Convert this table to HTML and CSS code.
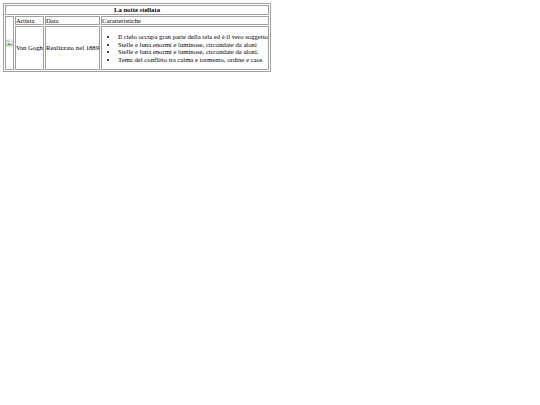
FILE: index.html
```html
<!DOCTYPE html>
<html lang="it">
<head>
<meta charset="utf-8">
<title>La notte stellata</title>
<link rel="stylesheet" href="styles.css">
</head>
<body>
<table class="painting">
  <tr>
    <th colspan="4">La notte stellata</th>
  </tr>
  <tr>
    <td rowspan="2" class="pic"><svg class="broken" viewBox="0 0 16 16" width="7" height="8"><path d="M1 1h10l4 4v10H1z" fill="#f4f4f4" stroke="#9a9a9a"/><path d="M2 13l4-5 3 3 2-2 3 4z" fill="#5a9a4a"/><circle cx="5" cy="5" r="1.5" fill="#5b8fd6"/></svg></td>
    <td>Artista</td>
    <td>Data</td>
    <td>Caratteristiche</td>
  </tr>
  <tr>
    <td>Van Gogh</td>
    <td>Realizzato nel 1889</td>
    <td>
      <ul class="features">
        <li>Il cielo occupa gran parte della tela ed è il vero soggetto</li>
        <li>Stelle e luna enormi e luminose, circondate da aloni</li>
        <li>Stelle e luna enormi e luminose, circondate da aloni.</li>
        <li>Tema del conflitto tra calma e tormento, ordine e caos</li>
      </ul>
    </td>
  </tr>
</table>
</body>
</html>
```
FILE: styles.css
```css
html, body {
  background: #fff;
}
body {
  margin: 3px;
  font-family: "Liberation Serif", "Times New Roman", serif;
  font-size: 6.7px;
  line-height: 7.5px;
  color: #000;
}
.painting {
  border: 1px solid #a0a0a0;
  border-spacing: 1px;
}
.painting th,
.painting td {
  border: 1px solid #a0a0a0;
  padding: 0;
}
.painting th {
  font-weight: bold;
}
.pic {
  vertical-align: middle;
}
.broken {
  display: block;
}
.features {
  margin: 6px 0;
  padding-left: 16px;
}
```
